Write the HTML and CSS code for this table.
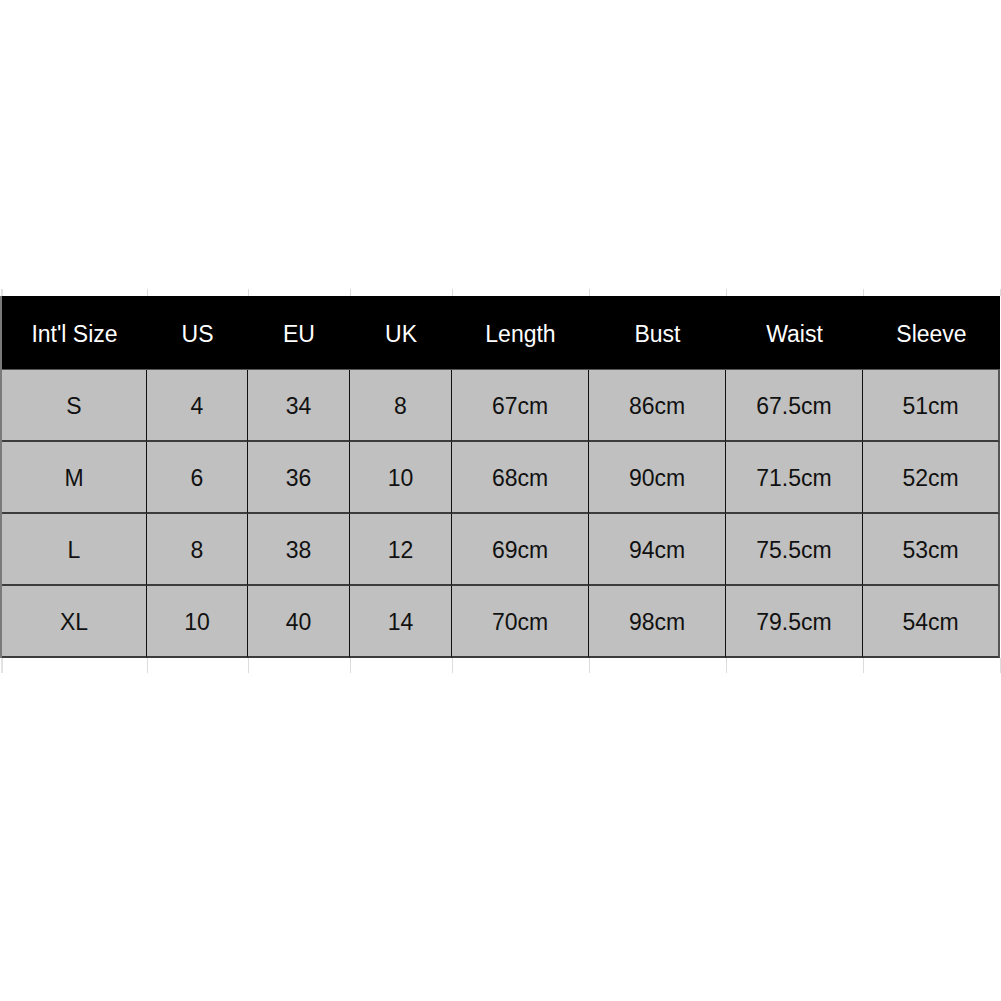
FILE: index.html
```html
<!DOCTYPE html>
<html>
<head>
<meta charset="utf-8">
<link rel="stylesheet" href="styles.css">
</head>
<body>
<div class="page">
  <div class="row ticks"><div></div><div></div><div></div><div></div><div></div><div></div><div></div><div></div></div>
  <div class="table">
    <div class="row head">
      <div>Int'l Size</div><div>US</div><div>EU</div><div>UK</div><div>Length</div><div>Bust</div><div>Waist</div><div>Sleeve</div>
    </div>
    <div class="row body">
      <div>S</div><div>4</div><div>34</div><div>8</div><div>67cm</div><div>86cm</div><div>67.5cm</div><div>51cm</div>
    </div>
    <div class="row body">
      <div>M</div><div>6</div><div>36</div><div>10</div><div>68cm</div><div>90cm</div><div>71.5cm</div><div>52cm</div>
    </div>
    <div class="row body">
      <div>L</div><div>8</div><div>38</div><div>12</div><div>69cm</div><div>94cm</div><div>75.5cm</div><div>53cm</div>
    </div>
    <div class="row body">
      <div>XL</div><div>10</div><div>40</div><div>14</div><div>70cm</div><div>98cm</div><div>79.5cm</div><div>54cm</div>
    </div>
  </div>
  <div class="row ticks bottom"><div></div><div></div><div></div><div></div><div></div><div></div><div></div><div></div></div>
</div>
</body>
</html>
```
FILE: styles.css
```css
html, body {
  margin: 0;
  padding: 0;
  background: #ffffff;
}
.page {
  padding-top: 289px;
  width: 1001px;
  font-family: "Liberation Sans", Arial, sans-serif;
}
.row {
  display: grid;
  grid-template-columns: 145px 101px 102px 102px 137px 137px 137px 137px;
}
.ticks {
  height: 7px;
  border-left: 2px solid #e2e2e2;
  margin-left: 1px;
}
.ticks > div {
  border-right: 1px solid #dcdcdc;
}
.ticks.bottom {
  height: 15px;
}
.table {
  border-left: 2px solid #7a7a7a;
  width: 998px;
}
.row > div {
  box-sizing: border-box;
}
.head {
  background: #000000;
  color: #ffffff;
  height: 73px;
  border-bottom: 1px solid #555;
}
.head > div {
  display: flex;
  align-items: center;
  justify-content: center;
  font-size: 23px;
  padding-top: 3px;
}
.body {
  height: 72px;
  background: #c0c0c0;
  color: #111111;
}
.body > div {
  display: flex;
  align-items: center;
  justify-content: center;
  font-size: 23px;
  padding-top: 3px;
  border-right: 1px solid #111;
  border-bottom: 2px solid #3c3c3c;
}
.body > div:last-child {
  border-right: 2px solid #555;
}
```
